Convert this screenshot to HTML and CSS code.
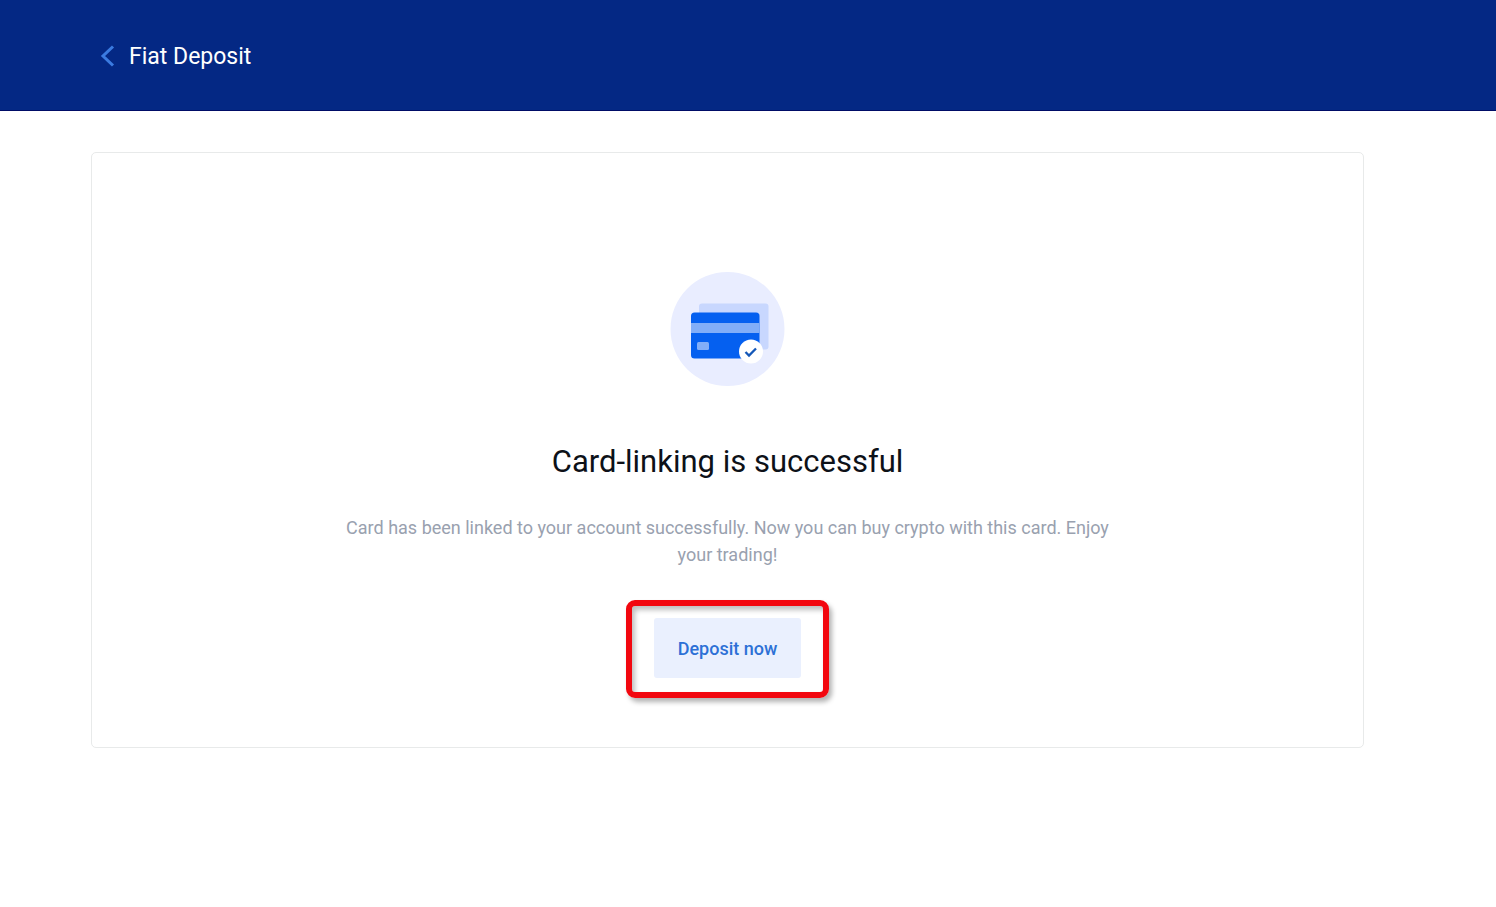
FILE: index.html
```html
<!DOCTYPE html>
<html lang="en">
  <head>
    <meta charset="UTF-8" />
    <meta name="viewport" content="width=device-width, initial-scale=1.0" />
    <title>Fiat Deposit</title>
    <link rel="stylesheet" href="styles.css">
  </head>
  <body>
    <header class="header">
      <a class="back-link" href="#">
        <svg class="back-icon" width="16" height="24" viewBox="0 0 16 24" aria-hidden="true">
          <path d="M13 1.500 3 11 13 20.500" fill="none" stroke="#3b7be0" stroke-width="3" />
        </svg>
        <span>Fiat Deposit</span>
      </a>
    </header>

    <main class="card">
      <svg class="card-icon" width="115" height="115" viewBox="0 0 115 115" aria-hidden="true">
        <circle cx="57.5" cy="57" r="57" fill="#e9edff" />
        <rect x="29" y="31.5" width="69.5" height="46" rx="3" fill="#c8d7fe" />
        <rect x="21" y="40.5" width="68.5" height="46" rx="3.5" fill="#0560f0" />
        <rect x="21" y="51" width="68.5" height="10" fill="#82aef8" />
        <rect x="27" y="70" width="12" height="8" rx="1.5" fill="#82aef8" />
        <circle cx="81" cy="79.5" r="12" fill="#fff" />
        <path d="M75.5 80 79 83.5 86 76.5" fill="none" stroke="#1457b8" stroke-width="2.3" />
      </svg>
      <h1 class="title">Card-linking is successful</h1>
      <p class="message">
        Card has been linked to your account successfully. Now you can buy
        crypto with this card. Enjoy your trading!
      </p>
      <div class="highlight">
        <button class="deposit-button" type="button">Deposit now</button>
      </div>
    </main>
  </body>
</html>
```
FILE: styles.css
```css
* {
  box-sizing: border-box;
}
body {
  margin: 0;
  font-family: Roboto, "Liberation Sans", sans-serif;
  background-color: #fff;
}
.header {
  display: flex;
  align-items: center;
  height: 111px;
  padding: 4px 100px 0;
  background-color: #042884;
  border-bottom: 1px solid #000c66;
}
.back-link {
  display: flex;
  align-items: center;
  gap: 13px;
  color: #fff;
  font-size: 23px;
  line-height: 28px;
  text-decoration: none;
}
.card {
  display: flex;
  flex-direction: column;
  align-items: center;
  margin: 41px 132px 41px 91px;
  padding: 119px 24px 49px;
  border: 1px solid #e8eaea;
  border-radius: 5px;
}
.card-icon {
  display: block;
}
.title {
  margin: 55px 0 0;
  color: #0d1118;
  font-size: 31px;
  font-weight: 400;
  line-height: 40px;
}
.message {
  max-width: 780px;
  margin: 32px 0 0;
  color: #99a1af;
  font-size: 18px;
  line-height: 27px;
  text-align: center;
}
.highlight {
  margin-top: 32px;
  padding: 12px 22px 14px;
  border: 6px solid #f2070f;
  border-radius: 9px;
  box-shadow: 3px 4px 5px rgba(0, 0, 0, 0.3),
    inset 3px 4px 5px rgba(0, 0, 0, 0.25);
}
.deposit-button {
  display: block;
  height: 60px;
  padding: 0 24px;
  border: 0;
  border-radius: 3px;
  background-color: #eaf0fe;
  color: #2d70d6;
  font-family: inherit;
  font-size: 18px;
  font-weight: 500;
  cursor: pointer;
}
```
